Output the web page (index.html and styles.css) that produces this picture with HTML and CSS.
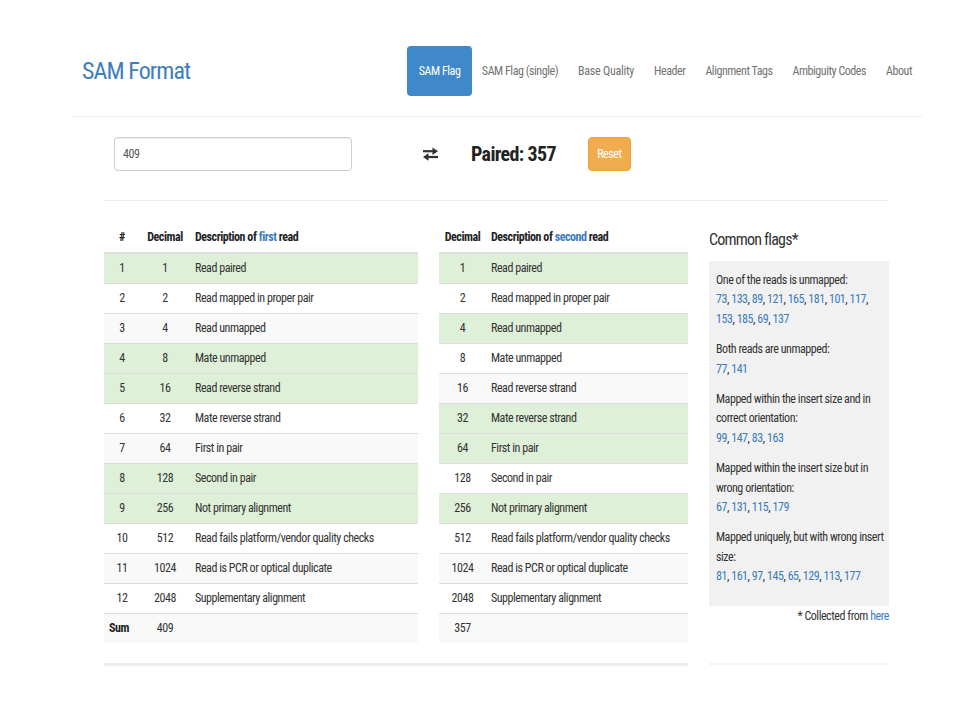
FILE: index.html
```html
<!DOCTYPE html>
<html lang="en">
<head>
<meta charset="utf-8">
<title>SAM Format</title>
<link rel="stylesheet" href="styles.css">
</head>
<body>
<header class="navbar">
  <a class="brand" href="#">SAM Format</a>
  <nav class="nav">
    <a class="nav-link active" href="#">SAM Flag</a>
    <a class="nav-link" href="#">SAM Flag (single)</a>
    <a class="nav-link" href="#">Base Quality</a>
    <a class="nav-link" href="#">Header</a>
    <a class="nav-link" href="#">Alignment Tags</a>
    <a class="nav-link" href="#">Ambiguity Codes</a>
    <a class="nav-link" href="#">About</a>
  </nav>
</header>

<main class="content">
  <div class="controls">
    <input class="flag-input" type="text" value="409">
    <span class="swap" aria-label="swap">
      <svg width="17" height="14" viewBox="0 0 17 14">
        <path d="M1 4.2H12" stroke="#333" stroke-width="2.2" fill="none"/>
        <path d="M10.5 0.5L16 4.2L10.5 7.9Z" fill="#333"/>
        <path d="M5 10H16" stroke="#333" stroke-width="2.2" fill="none"/>
        <path d="M6.5 6.3L1 10L6.5 13.7Z" fill="#333"/>
      </svg>
    </span>
    <span class="paired">Paired: 357</span>
    <button class="btn-reset" type="button">Reset</button>
  </div>
  <hr class="sep">

  <div class="grid">
    <table class="flags first">
      <thead>
        <tr><th class="c-num">#</th><th class="c-dec">Decimal</th><th class="c-desc">Description of <span class="hl">first</span> read</th></tr>
      </thead>
      <tbody>
        <tr class="on"><td class="c-num">1</td><td class="c-dec">1</td><td>Read paired</td></tr>
        <tr><td class="c-num">2</td><td class="c-dec">2</td><td>Read mapped in proper pair</td></tr>
        <tr><td class="c-num">3</td><td class="c-dec">4</td><td>Read unmapped</td></tr>
        <tr class="on"><td class="c-num">4</td><td class="c-dec">8</td><td>Mate unmapped</td></tr>
        <tr class="on"><td class="c-num">5</td><td class="c-dec">16</td><td>Read reverse strand</td></tr>
        <tr><td class="c-num">6</td><td class="c-dec">32</td><td>Mate reverse strand</td></tr>
        <tr><td class="c-num">7</td><td class="c-dec">64</td><td>First in pair</td></tr>
        <tr class="on"><td class="c-num">8</td><td class="c-dec">128</td><td>Second in pair</td></tr>
        <tr class="on"><td class="c-num">9</td><td class="c-dec">256</td><td>Not primary alignment</td></tr>
        <tr><td class="c-num">10</td><td class="c-dec">512</td><td>Read fails platform/vendor quality checks</td></tr>
        <tr><td class="c-num">11</td><td class="c-dec">1024</td><td>Read is PCR or optical duplicate</td></tr>
        <tr><td class="c-num">12</td><td class="c-dec">2048</td><td>Supplementary alignment</td></tr>
        <tr><td class="c-sum">Sum</td><td class="c-dec">409</td><td></td></tr>
      </tbody>
    </table>

    <table class="flags second">
      <thead>
        <tr><th class="c-dec">Decimal</th><th class="c-desc">Description of <span class="hl">second</span> read</th></tr>
      </thead>
      <tbody>
        <tr class="on"><td class="c-dec">1</td><td>Read paired</td></tr>
        <tr><td class="c-dec">2</td><td>Read mapped in proper pair</td></tr>
        <tr class="on"><td class="c-dec">4</td><td>Read unmapped</td></tr>
        <tr><td class="c-dec">8</td><td>Mate unmapped</td></tr>
        <tr><td class="c-dec">16</td><td>Read reverse strand</td></tr>
        <tr class="on"><td class="c-dec">32</td><td>Mate reverse strand</td></tr>
        <tr class="on"><td class="c-dec">64</td><td>First in pair</td></tr>
        <tr><td class="c-dec">128</td><td>Second in pair</td></tr>
        <tr class="on"><td class="c-dec">256</td><td>Not primary alignment</td></tr>
        <tr><td class="c-dec">512</td><td>Read fails platform/vendor quality checks</td></tr>
        <tr><td class="c-dec">1024</td><td>Read is PCR or optical duplicate</td></tr>
        <tr><td class="c-dec">2048</td><td>Supplementary alignment</td></tr>
        <tr><td class="c-dec">357</td><td></td></tr>
      </tbody>
    </table>

    <aside class="side">
      <h3 class="side-title">Common flags*</h3>
      <div class="well">
        <p>One of the reads is unmapped:<br>
          <a href="#">73</a>, <a href="#">133</a>, <a href="#">89</a>, <a href="#">121</a>, <a href="#">165</a>, <a href="#">181</a>, <a href="#">101</a>, <a href="#">117</a>, <a href="#">153</a>, <a href="#">185</a>, <a href="#">69</a>, <a href="#">137</a></p>
        <p>Both reads are unmapped:<br>
          <a href="#">77</a>, <a href="#">141</a></p>
        <p>Mapped within the insert size and in correct orientation:<br>
          <a href="#">99</a>, <a href="#">147</a>, <a href="#">83</a>, <a href="#">163</a></p>
        <p>Mapped within the insert size but in wrong orientation:<br>
          <a href="#">67</a>, <a href="#">131</a>, <a href="#">115</a>, <a href="#">179</a></p>
        <p>Mapped uniquely, but with wrong insert size:<br>
          <a href="#">81</a>, <a href="#">161</a>, <a href="#">97</a>, <a href="#">145</a>, <a href="#">65</a>, <a href="#">129</a>, <a href="#">113</a>, <a href="#">177</a></p>
      </div>
      <p class="note">* Collected from <a href="#">here</a></p>
    </aside>

    <div class="foot-left"></div>
    <div class="foot-right"></div>
  </div>
</main>
</body>
</html>
```

FILE: styles.css
```css
* { box-sizing: border-box; }

body {
  margin: 0;
  background: #fff;
  color: #333;
  font-family: "Roboto Condensed", "Liberation Sans", sans-serif;
  font-size: 12px;
  letter-spacing: -0.45px;
}

a { color: #3a7bbf; text-decoration: none; }

.navbar {
  margin-left: 72px;
  width: 850px;
  padding: 46px 0 20px 10px;
  border-bottom: 1px solid #eee;
  display: flex;
  justify-content: space-between;
  align-items: center;
}

.brand {
  font-size: 24px;
  letter-spacing: -0.9px;
  color: #3d7ebf;
  line-height: 50px;
}

.nav { display: flex; }

.nav-link {
  color: #727272;
  font-size: 12px;
  line-height: 50px;
  padding: 0 10px;
  border-radius: 4px;
}

.nav-link:nth-child(3) { letter-spacing: -0.25px; }

.nav-link.active {
  background: #3f89ca;
  color: #fff;
  padding: 0 11.5px;
}

.content {
  margin-left: 104px;
  width: 785px;
  padding-top: 20px;
}

.controls {
  display: flex;
  align-items: center;
  height: 34px;
}

.flag-input {
  margin-left: 10px;
  width: 238px;
  height: 34px;
  border: 1px solid #ccc;
  border-radius: 4px;
  padding: 0 8px;
  font: inherit;
  font-size: 12px;
  letter-spacing: -0.45px;
  color: #555;
  box-shadow: inset 0 1px 1px rgba(0,0,0,0.06);
}

.swap {
  margin-left: 70px;
  display: flex;
}

.paired {
  margin-left: 32px;
  font-size: 20px;
  letter-spacing: -0.65px;
  font-weight: bold;
  color: #222;
}

.btn-reset {
  margin-left: 32px;
  width: 43px;
  height: 34px;
  border: 1px solid #eea236;
  background: #f0ad4e;
  color: #fff;
  border-radius: 4px;
  font: inherit;
  font-size: 12px;
  letter-spacing: -0.45px;
  padding: 0;
}

.sep {
  margin: 29px 0 0;
  border: 0;
  border-top: 1px solid #eee;
}

.grid {
  display: grid;
  grid-template-columns: 314px 249px 180px;
  column-gap: 21px;
  margin-top: 22px;
  align-items: start;
}

.flags {
  width: 100%;
  border-collapse: collapse;
  border-spacing: 0;
}

.flags th,
.flags td {
  padding: 5px 5px;
  line-height: 19px;
  text-align: left;
  vertical-align: middle;
}

.flags th {
  font-weight: bold;
  border-bottom: 2px solid #ddd;
  color: #222;
}

.flags td { border-top: 1px solid #ddd; }
.flags thead tr:first-child th { border-top: 0; }

.flags tbody tr:nth-child(odd) { background: #f9f9f9; }
.flags tbody tr.on { background: #dff0d8; }

.flags .c-num { text-align: center; }
.flags .c-dec { text-align: center; }
.flags .c-sum { font-weight: bold; text-align: left; color: #222; }

.first .c-num { width: 36px; }
.first .c-dec { width: 50px; }
.second .c-dec { width: 47px; }

.hl { color: #3a7bbf; }

.side-title {
  margin: 7px 0 11px;
  font-size: 16px;
  letter-spacing: -0.8px;
  line-height: 20px;
  font-weight: normal;
  color: #333;
}

.well {
  background: #f1f1f1;
  padding: 10px 4px 8px 7px;
}

.well p {
  margin: 0 0 11px;
  line-height: 19.4px;
}

.note {
  margin: 0;
  text-align: right;
  line-height: 20px;
}

.foot-left {
  grid-column: 1 / 3;
  margin-top: 20px;
  border-top: 3px solid #eee;
}

.foot-right {
  margin-top: 20px;
  border-top: 2px solid #f4f4f4;
}
```
